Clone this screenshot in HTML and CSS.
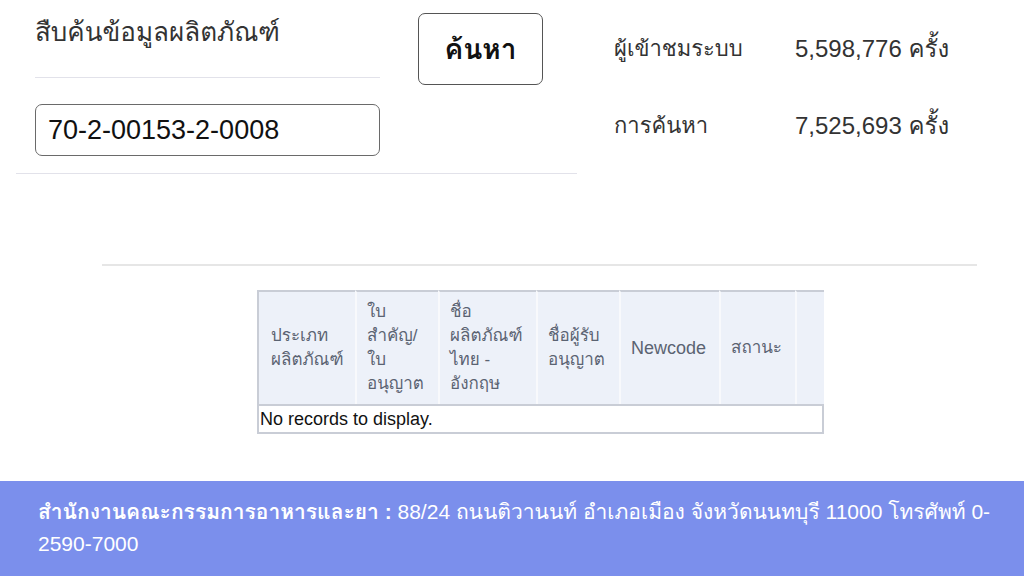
FILE: index.html
```html
<!DOCTYPE html>
<html lang="th">
<head>
<meta charset="utf-8">
<title>สืบค้นข้อมูลผลิตภัณฑ์</title>
<link rel="stylesheet" href="styles.css">
</head>
<body>
<div class="page">
  <div class="top">
    <div class="search-box">
      <div class="search-form">
        <div class="form-col">
          <h1 class="title">สืบค้นข้อมูลผลิตภัณฑ์</h1>
          <input class="code-input" type="text" value="70-2-00153-2-0008">
        </div>
        <button class="search-btn" type="button">ค้นหา</button>
      </div>
    </div>
    <div class="stats">
      <div class="stat-row"><span class="stat-label">ผู้เข้าชมระบบ</span><span class="stat-value">5,598,776 ครั้ง</span></div>
      <div class="stat-row"><span class="stat-label">การค้นหา</span><span class="stat-value">7,525,693 ครั้ง</span></div>
    </div>
  </div>
  <div class="divider"></div>
  <div class="table-wrap">
    <table class="grid">
      <thead>
        <tr>
          <th class="c1">ประเภท<br>ผลิตภัณฑ์</th>
          <th class="c2">ใบ<br>สำคัญ/<br>ใบ<br>อนุญาต</th>
          <th class="c3">ชื่อ<br>ผลิตภัณฑ์<br>ไทย -<br>อังกฤษ</th>
          <th class="c4">ชื่อผู้รับ<br>อนุญาต</th>
          <th class="c5">Newcode</th>
          <th class="c6">สถานะ</th>
          <th class="c7"></th>
        </tr>
      </thead>
      <tbody>
        <tr><td class="empty" colspan="7">No records to display.</td></tr>
      </tbody>
    </table>
  </div>
  <footer class="footer">
    <p><strong>สำนักงานคณะกรรมการอาหารและยา :</strong> 88/24 ถนนติวานนท์ อำเภอเมือง จังหวัดนนทบุรี 11000 โทรศัพท์ 0-<wbr>2590-7000</p>
  </footer>
</div>
</body>
</html>
```
FILE: styles.css
```css
html, body {
  margin: 0;
  padding: 0;
  background: #ffffff;
}
body {
  font-family: "Liberation Sans", "Loma", sans-serif;
  color: #222;
  width: 1024px;
  height: 576px;
  overflow: hidden;
}
.page {
  display: flex;
  flex-direction: column;
  height: 576px;
}
.top {
  display: flex;
}
.search-box {
  width: 561px;
  height: 174px;
  margin-left: 16px;
  border-bottom: 1px solid #e2e2ea;
  box-sizing: border-box;
}
.search-form {
  display: flex;
  padding-left: 19px;
}
.form-col {
  width: 345px;
}
.title {
  margin: 0;
  height: 78px;
  box-sizing: border-box;
  padding-top: 12px;
  font-size: 26px;
  font-weight: 400;
  line-height: 40px;
  color: #333;
  border-bottom: 1px solid #e2e2ea;
}
.code-input {
  display: block;
  margin-top: 26px;
  width: 345px;
  height: 52px;
  box-sizing: border-box;
  border: 1.5px solid #6a6a6a;
  border-radius: 7px;
  padding: 0 12px;
  font-family: "Liberation Sans", sans-serif;
  font-size: 27px;
  color: #111;
  background: #fff;
}
.search-btn {
  margin-left: 38px;
  margin-top: 13px;
  width: 125px;
  height: 72px;
  border: 1px solid #555;
  border-radius: 7px;
  background: #fff;
  font-family: inherit;
  font-size: 28px;
  font-weight: 700;
  color: #111;
  padding: 0;
}
.stats {
  margin-left: 37px;
  padding-top: 28px;
  display: flex;
  flex-direction: column;
  gap: 37px;
}
.stat-row {
  display: flex;
  height: 40px;
  align-items: center;
  font-size: 22px;
  color: #333;
}
.stat-label {
  width: 181px;
}
.stat-value {
  font-size: 24px;
}
.divider {
  margin: 90px 47px 0 102px;
  height: 2px;
  background: #e6e6e6;
}
.table-wrap {
  margin: 24px 0 0 257px;
  width: 567px;
  overflow: hidden;
}
.grid {
  border-collapse: separate;
  border-spacing: 0;
  table-layout: fixed;
  width: 567px;
}
.grid th {
  background: #edf1f9;
  color: #5b6372;
  font-weight: 400;
  font-size: 17px;
  line-height: 24px;
  text-align: left;
  vertical-align: middle;
  padding: 6px 10px 6px;
  height: 114px;
  box-sizing: border-box;
  border-top: 2px solid #c9cdd6;
  border-left: 2px solid #f8f9fc;
}
.grid th.c1 { border-left: 2px solid #c9cdd6; width: 98px; padding-left: 12px; }
.grid th.c2 { width: 83px; }
.grid th.c3 { width: 98px; }
.grid th.c4 { width: 83px; }
.grid th.c5 { width: 100px; font-size: 18px; }
.grid th.c6 { width: 76px; }
.grid th.c7 { width: 29px; }
.grid td.empty {
  height: 30px;
  box-sizing: border-box;
  padding: 0 1px;
  font-size: 18px;
  color: #111;
  border: 2px solid #c9cdd6;
  background: #fff;
}
.footer {
  margin-top: auto;
  height: 95px;
  background: #7b8fec;
  color: #fff;
  box-sizing: border-box;
  padding: 15px 16px 0 38px;
}
.footer p {
  margin: 0;
  font-size: 21px;
  line-height: 32px;
}
.footer strong {
  font-weight: 700;
}
```
